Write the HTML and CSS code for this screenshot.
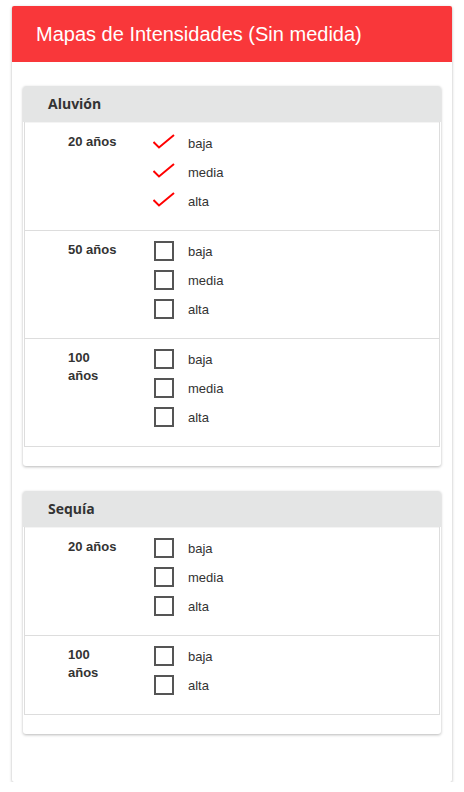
FILE: index.html
```html
<!DOCTYPE html>
<html lang="es">
<head>
    <meta charset="UTF-8">
    <meta name="viewport" content="width=device-width, initial-scale=1.0">
    <title>Mapas de Intensidades</title>
    <link rel="stylesheet" href="styles.css">
</head>
<body>
    <div class="card">
        <div class="card-head">Mapas de Intensidades (Sin medida)</div>
        <div class="card-body">

            <div class="panel">
                <div class="panel-head">Aluvión</div>
                <div class="panel-body">
                    <div class="row">
                        <div class="period">20 años</div>
                        <div class="options">
                            <label class="opt"><span class="tick"><svg width="22" height="20" viewBox="0 0 22 20"><polyline points="0.5,9 6,14.5 21,2" fill="none" stroke="#f00" stroke-width="2"/></svg></span>baja</label>
                            <label class="opt"><span class="tick"><svg width="22" height="20" viewBox="0 0 22 20"><polyline points="0.5,9 6,14.5 21,2" fill="none" stroke="#f00" stroke-width="2"/></svg></span>media</label>
                            <label class="opt"><span class="tick"><svg width="22" height="20" viewBox="0 0 22 20"><polyline points="0.5,9 6,14.5 21,2" fill="none" stroke="#f00" stroke-width="2"/></svg></span>alta</label>
                        </div>
                    </div>
                    <div class="row">
                        <div class="period">50 años</div>
                        <div class="options">
                            <label class="opt"><span class="box"></span>baja</label>
                            <label class="opt"><span class="box"></span>media</label>
                            <label class="opt"><span class="box"></span>alta</label>
                        </div>
                    </div>
                    <div class="row">
                        <div class="period">100 años</div>
                        <div class="options">
                            <label class="opt"><span class="box"></span>baja</label>
                            <label class="opt"><span class="box"></span>media</label>
                            <label class="opt"><span class="box"></span>alta</label>
                        </div>
                    </div>
                </div>
                <div class="panel-foot"></div>
            </div>

            <div class="panel">
                <div class="panel-head">Sequía</div>
                <div class="panel-body">
                    <div class="row">
                        <div class="period">20 años</div>
                        <div class="options">
                            <label class="opt"><span class="box"></span>baja</label>
                            <label class="opt"><span class="box"></span>media</label>
                            <label class="opt"><span class="box"></span>alta</label>
                        </div>
                    </div>
                    <div class="row">
                        <div class="period">100 años</div>
                        <div class="options">
                            <label class="opt"><span class="box"></span>baja</label>
                            <label class="opt"><span class="box"></span>alta</label>
                        </div>
                    </div>
                </div>
                <div class="panel-foot"></div>
            </div>

        </div>
    </div>
</body>
</html>
```

FILE: styles.css
```css
body {
    font-family: 'Liberation Sans', Arial, sans-serif;
    background-color: #fff;
    margin: 0;
    padding: 6px 12px 0;
    color: #333;
}
.card {
    background-color: white;
    border-radius: 2px;
    box-shadow: 0 1px 3px rgba(0,0,0,0.3);
}
.card-head {
    background-color: #f9373a;
    color: white;
    font-size: 20px;
    height: 56px;
    line-height: 56px;
    padding-left: 24px;
    border-radius: 2px 2px 0 0;
}
.card-body {
    padding: 24px 11px 48px;
    display: flex;
    flex-direction: column;
    gap: 25px;
}
.panel {
    background-color: white;
    border-radius: 3px;
    box-shadow: 0 1px 3px rgba(0,0,0,0.28);
}
.panel-head {
    background-color: #e4e5e5;
    font-family: 'Open Sans', sans-serif;
    font-weight: bold;
    font-size: 14px;
    color: #333;
    height: 36px;
    line-height: 36px;
    padding-left: 25px;
    border-radius: 3px 3px 0 0;
}
.panel-body {
    margin: 0 1px;
    border: 1px solid #ddd;
    border-top: none;
}
.row {
    display: flex;
    padding: 10px 0 10px 43px;
    border-top: 1px solid #ddd;
}
.row:first-child {
    border-top: 1px solid #f4f4f4;
}
.period {
    width: 52px;
    margin-right: 34px;
    font-weight: bold;
    font-size: 13px;
    line-height: 18px;
}
.options {
    display: flex;
    flex-direction: column;
}
.opt {
    display: flex;
    align-items: center;
    height: 20px;
    margin-bottom: 9px;
    font-size: 13px;
    color: #333;
}
.box {
    width: 16px;
    height: 16px;
    border: 2px solid #555;
    margin-right: 14px;
}
.tick {
    width: 22px;
    height: 20px;
    margin: 0 13px 0 -1px;
}
.tick svg {
    display: block;
}
.panel-foot {
    height: 19px;
}
```
